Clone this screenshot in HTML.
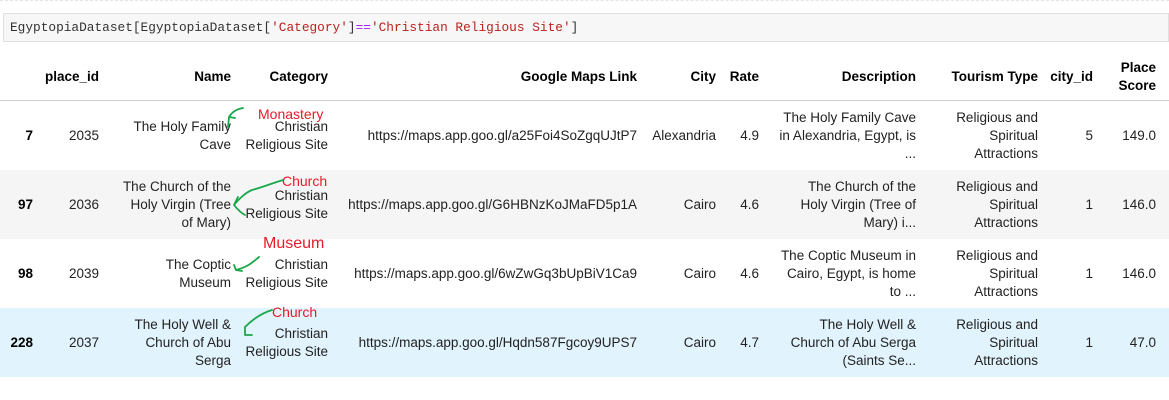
<!DOCTYPE html>
<html><head><meta charset="utf-8"><style>
body{margin:0;width:1169px;height:400px;background:#fff;font-family:"Liberation Sans",sans-serif;font-size:13.5px;color:#222;position:relative;overflow:hidden}
.code{position:absolute;left:3px;top:13px;width:1166px;height:29px;background:#f7f7f7;border:1px solid #e0e0e0;box-sizing:border-box;font-family:"Liberation Mono",monospace;font-size:12.8px;line-height:28px;padding-left:6px;color:#333}
.s{color:#ba2121}.o{color:#aa22ff}
.row{position:absolute;left:0;width:1169px;height:69px}
.c{position:absolute;top:0;height:100%;display:flex;align-items:center;justify-content:flex-end;text-align:right;line-height:18px;white-space:nowrap}
.h{font-weight:bold;color:#000}
.hd{position:absolute;left:0;top:53px;width:1169px;height:47px;border-bottom:1.5px solid #ccc}
.a{position:absolute;color:#e8192c;font-size:14px;line-height:16px}
</style></head><body>
<div style="position:absolute;left:0;top:0;width:1169px;border-top:1px dashed #e4e4e4"></div>
<div class="code">EgyptopiaDataset[EgyptopiaDataset[<span class="s">'Category'</span>]<span class="o">==</span><span class="s">'Christian Religious Site'</span>]</div>
<div class="hd">
<div class="c h" style="left:40px;width:59px">place_id</div>
<div class="c h" style="left:120px;width:111px">Name</div>
<div class="c h" style="left:240px;width:88px">Category</div>
<div class="c h" style="left:340px;width:297px">Google Maps Link</div>
<div class="c h" style="left:660px;width:56px">City</div>
<div class="c h" style="left:720px;width:39px">Rate</div>
<div class="c h" style="left:770px;width:146px">Description</div>
<div class="c h" style="left:930px;width:108px">Tourism Type</div>
<div class="c h" style="left:1040px;width:53px">city_id</div>
<div class="c h" style="left:1100px;width:56px">Place<br>Score</div>
</div>

<div class="row" style="top:101px">
<div class="c h" style="left:0;width:33px">7</div>
<div class="c" style="left:40px;width:59px">2035</div>
<div class="c" style="left:115px;width:116px">The Holy Family<br>Cave</div>
<div class="c" style="left:240px;width:88px">Christian<br>Religious Site</div>
<div class="c" style="left:340px;width:297px">https://maps.app.goo.gl/a25Foi4SoZgqUJtP7</div>
<div class="c" style="left:640px;width:76px">Alexandria</div>
<div class="c" style="left:720px;width:39px">4.9</div>
<div class="c" style="left:770px;width:146px">The Holy Family Cave<br>in Alexandria, Egypt, is<br>...</div>
<div class="c" style="left:930px;width:108px">Religious and<br>Spiritual<br>Attractions</div>
<div class="c" style="left:1040px;width:53px">5</div>
<div class="c" style="left:1100px;width:56px">149.0</div>
</div>

<div class="row" style="top:170px;background:#f5f5f5">
<div class="c h" style="left:0;width:33px">97</div>
<div class="c" style="left:40px;width:59px">2036</div>
<div class="c" style="left:110px;width:121px">The Church of the<br>Holy Virgin (Tree<br>of Mary)</div>
<div class="c" style="left:240px;width:88px">Christian<br>Religious Site</div>
<div class="c" style="left:340px;width:297px">https://maps.app.goo.gl/G6HBNzKoJMaFD5p1A</div>
<div class="c" style="left:640px;width:76px">Cairo</div>
<div class="c" style="left:720px;width:39px">4.6</div>
<div class="c" style="left:770px;width:146px">The Church of the<br>Holy Virgin (Tree of<br>Mary) i...</div>
<div class="c" style="left:930px;width:108px">Religious and<br>Spiritual<br>Attractions</div>
<div class="c" style="left:1040px;width:53px">1</div>
<div class="c" style="left:1100px;width:56px">146.0</div>
</div>

<div class="row" style="top:239px">
<div class="c h" style="left:0;width:33px">98</div>
<div class="c" style="left:40px;width:59px">2039</div>
<div class="c" style="left:115px;width:116px">The Coptic<br>Museum</div>
<div class="c" style="left:240px;width:88px">Christian<br>Religious Site</div>
<div class="c" style="left:340px;width:297px">https://maps.app.goo.gl/6wZwGq3bUpBiV1Ca9</div>
<div class="c" style="left:640px;width:76px">Cairo</div>
<div class="c" style="left:720px;width:39px">4.6</div>
<div class="c" style="left:770px;width:146px">The Coptic Museum in<br>Cairo, Egypt, is home<br>to ...</div>
<div class="c" style="left:930px;width:108px">Religious and<br>Spiritual<br>Attractions</div>
<div class="c" style="left:1040px;width:53px">1</div>
<div class="c" style="left:1100px;width:56px">146.0</div>
</div>

<div class="row" style="top:308px;background:#e1f3fc">
<div class="c h" style="left:0;width:33px">228</div>
<div class="c" style="left:40px;width:59px">2037</div>
<div class="c" style="left:115px;width:116px">The Holy Well &amp;<br>Church of Abu<br>Serga</div>
<div class="c" style="left:240px;width:88px">Christian<br>Religious Site</div>
<div class="c" style="left:340px;width:297px">https://maps.app.goo.gl/Hqdn587Fgcoy9UPS7</div>
<div class="c" style="left:640px;width:76px">Cairo</div>
<div class="c" style="left:720px;width:39px">4.7</div>
<div class="c" style="left:770px;width:146px">The Holy Well &amp;<br>Church of Abu Serga<br>(Saints Se...</div>
<div class="c" style="left:930px;width:108px">Religious and<br>Spiritual<br>Attractions</div>
<div class="c" style="left:1040px;width:53px">1</div>
<div class="c" style="left:1100px;width:56px">47.0</div>
</div>

<div class="a" style="left:258px;top:106px">Monastery</div>
<div class="a" style="left:282px;top:173px">Church</div>
<div class="a" style="left:263px;top:235px;font-size:16px;line-height:18px">Museum</div>
<div class="a" style="left:272px;top:304px">Church</div>

<svg style="position:absolute;left:0;top:0" width="1169" height="400" fill="none" stroke="#1aa64a" stroke-width="1.8" stroke-linecap="round" stroke-linejoin="round">
<path d="M243 108 C237 109 232 112 229 117 M229 117 L228 127 M229 117 L235 118"/>
<path d="M283 180 C270 184 260 188 252 190 C245 193 240 198 234 205 M234 205 L238 197 M234 205 C238 210 241 213 245 215"/>
<path d="M259 257 C253 262 248 267 236 270 M236 270 L234 265 M236 270 L242 271"/>
<path d="M272 310 C262 313 254 318 245 327 L245 335 L252 335"/>
</svg>
</body></html>
